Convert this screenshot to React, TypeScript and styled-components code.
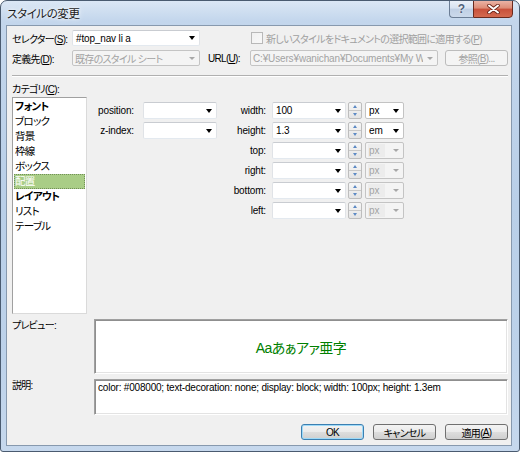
import React from "react";
import styled, { createGlobalStyle, css } from "styled-components";

const Global = createGlobalStyle`
  html, body { margin: 0; padding: 0; background: #ffffff; }
  body {
    font-family: "Liberation Sans", "Noto Sans CJK JP", sans-serif;
    font-size: 10px;
    letter-spacing: -0.7px;
    color: #000;
    font-feature-settings: "palt";
  }
  * { box-sizing: border-box; }
`;

const Window = styled.div`
  width: 520px;
  height: 452px;
  border: 1px solid #4a5b70;
  border-radius: 7px 7px 3px 3px;
  background: linear-gradient(180deg, #dbe7f5 0px, #c3d6ec 20px, #b9cfe8 45%, #bdd2ea 80%, #c6d8ed 100%);
  display: flex;
  flex-direction: column;
  padding: 0 7px 5px 5px;
  overflow: hidden;
`;

const TitleBar = styled.div`
  height: 24px;
  flex: none;
  display: flex;
  align-items: center;
`;

const TitleText = styled.div`
  flex: 1;
  margin-left: 1px;
  font-size: 11.5px;
  letter-spacing: -0.4px;
  color: #1a1a1a;
  text-shadow: 0 0 6px rgba(255, 255, 255, 0.95), 0 0 3px rgba(255, 255, 255, 0.9);
`;

const CaptionGroup = styled.div`
  align-self: flex-start;
  display: flex;
  margin-top: -1px;
  margin-right: -1px;
`;

const CaptionButton = styled.div<{ $kind: "help" | "close" }>`
  height: 18px;
  display: flex;
  align-items: center;
  justify-content: center;
  letter-spacing: 0;
  ${(p) =>
    p.$kind === "help"
      ? css`
          width: 24px;
          border: 1px solid #6b7d95;
          border-right: none;
          border-radius: 0 0 0 4px;
          background: linear-gradient(180deg, #eaf0f8 0%, #d7e2f0 45%, #bfcfe4 50%, #cbd9eb 100%);
          color: #50627a;
          font-size: 12px;
          font-weight: bold;
          text-shadow: 0 0 2px #fff;
        `
      : css`
          width: 40px;
          border: 1px solid #6a2a1e;
          border-radius: 0 0 4px 0;
          background: linear-gradient(180deg, #eab3a5 0%, #dd8b75 45%, #c8503a 50%, #d46a4f 100%);
        `}
`;

const Client = styled.div`
  flex: 1;
  background: #f0f0f0;
  border: 1px solid #8799ae;
  padding: 4px 3px 0 5px;
  display: flex;
  flex-direction: column;
`;

const Row = styled.div<{ $mt?: number }>`
  flex: none;
  height: 16px;
  display: flex;
  align-items: center;
  margin-top: ${(p) => p.$mt ?? 0}px;
`;

const Label = styled.div<{ $w?: number; $ml?: number; $disabled?: boolean }>`
  flex: none;
  ${(p) => (p.$w ? `width: ${p.$w}px;` : "")}
  margin-left: ${(p) => p.$ml ?? 0}px;
  white-space: nowrap;
  color: ${(p) => (p.$disabled ? "#a0a0a0" : "#000")};
`;

type ComboKind = "edit" | "list" | "disabled";

const ComboBox = styled.div<{ $w?: number; $h?: number; $kind: ComboKind }>`
  flex: none;
  width: ${(p) => (p.$w ? `${p.$w}px` : "100%")};
  height: ${(p) => p.$h ?? 17}px;
  border: 1px solid;
  border-radius: 2px;
  display: flex;
  align-items: center;
  overflow: hidden;
  ${(p) =>
    p.$kind === "edit"
      ? css`
          border-color: #c9ccd1 #e0e3e7 #e3e9ef #e0e3e7;
          background: #fff;
          color: #000;
        `
      : p.$kind === "list"
      ? css`
          border-color: #c3c3c3;
          background: #fff;
          color: #000;
        `
      : css`
          border-color: #c4c4c4;
          background: #f4f4f4;
          color: #a3a3a3;
        `}
`;

const ComboText = styled.span<{ $latin?: boolean; $pl?: number }>`
  flex: 1;
  min-width: 0;
  padding-left: ${(p) => p.$pl ?? 2}px;
  white-space: nowrap;
  overflow: hidden;
  ${(p) =>
    p.$latin &&
    css`
      font-size: 10px;
      letter-spacing: -0.15px;
    `}
`;

const ShadeText = styled.span`
  display: inline-block;
  background: #ececec;
  padding: 0 6px 0 1px;
  line-height: 13px;
`;

const ComboArrow = styled.span<{ $disabled?: boolean }>`
  flex: none;
  width: 14px;
  height: 100%;
  display: flex;
  align-items: center;
  justify-content: center;
  &::after {
    content: "";
    display: block;
    ${(p) =>
      p.$disabled
        ? css`
            border-left: 3px solid transparent;
            border-right: 3px solid transparent;
            border-top: 3px solid #a8a8a8;
          `
        : css`
            border-left: 3.5px solid transparent;
            border-right: 3.5px solid transparent;
            border-top: 4px solid #000;
          `}
  }
`;

const CheckBox = styled.div`
  flex: none;
  width: 12px;
  height: 12px;
  margin-left: 51px;
  border: 1px solid #b8b8b8;
  background: linear-gradient(135deg, #f0f0f0, #f8f8f8);
`;

const PushButton = styled.div<{ $w?: number; $ml?: number; $disabled?: boolean; $default?: boolean }>`
  flex: none;
  width: ${(p) => p.$w ?? 63}px;
  height: 16px;
  margin-left: ${(p) => p.$ml ?? 0}px;
  border: 1px solid #707070;
  border-radius: 3px;
  display: flex;
  align-items: center;
  justify-content: center;
  white-space: nowrap;
  background: linear-gradient(180deg, #f3f3f3 0%, #ebebeb 48%, #dddddd 52%, #cfcfcf 100%);
  ${(p) =>
    p.$disabled &&
    css`
      border-color: #bcbcbc;
      background: #f4f4f4;
      color: #a3a3a3;
    `}
  ${(p) =>
    p.$default &&
    css`
      border-color: #3c7fb1;
      box-shadow: inset 0 0 0 1px #9edaf8;
    `}
`;

const Separator = styled.div`
  flex: none;
  height: 2px;
  margin-top: 9px;
  border-top: 1px solid #b0b0b0;
  border-bottom: 1px solid #ffffff;
`;

const SectionLabel = styled.div`
  flex: none;
  height: 14px;
  line-height: 14px;
  margin-top: 6px;
`;

const MainArea = styled.div`
  flex: none;
  height: 217px;
  display: flex;
  align-items: flex-start;
`;

const CategoryList = styled.div`
  flex: none;
  width: 75px;
  height: 217px;
  background: #fff;
  border: 1px solid;
  border-color: #a0a0a0 #dadada #dadada #a0a0a0;
  padding: 1px 1px 0 1px;
`;

const CategoryItem = styled.div<{ $bold?: boolean; $selected?: boolean }>`
  height: 15px;
  line-height: 15px;
  padding-left: 1px;
  white-space: nowrap;
  font-size: 10.5px;
  font-weight: ${(p) => (p.$bold ? 700 : 400)};
  ${(p) =>
    p.$selected &&
    css`
      background: #a9cd86;
      color: #fff;
      outline: 1px dotted #728f58;
      outline-offset: -1px;
    `}
`;

const PropGrid = styled.div`
  display: grid;
  grid-template-columns: 53px 74px 55px 74px 19px 39px;
  grid-auto-rows: 17px;
  row-gap: 3px;
  margin: 5px 0 0 3px;
`;

const PropLabel = styled.div<{ $pr: number }>`
  text-align: right;
  padding-right: ${(p) => p.$pr}px;
  line-height: 17px;
  font-size: 10px;
  letter-spacing: -0.15px;
  white-space: nowrap;
`;

const Spin = styled.div`
  margin-left: 2px;
  width: 14px;
  height: 17px;
  border: 1px solid #bdbdbd;
  border-radius: 2px;
  display: flex;
  flex-direction: column;
  background: linear-gradient(180deg, #f7f7f7, #e4e4e4);
`;

const SpinHalf = styled.div<{ $dir: "up" | "down" }>`
  flex: 1;
  display: flex;
  align-items: center;
  justify-content: center;
  ${(p) => p.$dir === "up" && "border-bottom: 1px solid #c8c8c8;"}
  &::after {
    content: "";
    display: block;
    border-left: 2.5px solid transparent;
    border-right: 2.5px solid transparent;
    ${(p) =>
      p.$dir === "up"
        ? "border-bottom: 3px solid #5d8ac4;"
        : "border-top: 3px solid #5d8ac4;"}
  }
`;

const Empty = styled.div``;

const FieldRow = styled.div<{ $mt: number; $h: number }>`
  flex: none;
  display: flex;
  height: ${(p) => p.$h}px;
  margin-top: ${(p) => p.$mt}px;
`;

const FieldLabel = styled.div`
  flex: none;
  width: 82px;
  line-height: 13px;
`;

const SunkenBox = styled.div`
  flex: none;
  width: 414px;
  height: 100%;
  background: #fff;
  border: 1px solid;
  border-color: #a0a0a0 #ffffff #ffffff #a0a0a0;
  box-shadow: inset 1px 1px 0 #8f8f8f, inset -1px -1px 0 #e3e3e3;
`;

const PreviewBox = styled(SunkenBox)`
  display: flex;
  align-items: center;
  justify-content: center;
`;

const PreviewText = styled.span`
  color: #008000;
  font-size: 14px;
  letter-spacing: -0.5px;
`;

const DescBox = styled(SunkenBox)`
  padding: 1px 0 0 2px;
`;

const DescText = styled.div`
  font-size: 10px;
  letter-spacing: -0.2px;
  line-height: 13px;
  padding-left: 1px;
  white-space: nowrap;
`;

const ButtonRow = styled.div`
  flex: none;
  display: flex;
  justify-content: flex-end;
  gap: 9px;
  margin-top: 9px;
`;

const categories: { name: string; bold?: boolean; selected?: boolean }[] = [
  { name: "フォント", bold: true },
  { name: "ブロック" },
  { name: "背景" },
  { name: "枠線" },
  { name: "ボックス" },
  { name: "配置", selected: true },
  { name: "レイアウト", bold: true },
  { name: "リスト" },
  { name: "テーブル" },
];

type SideRow = { label: string; value: string; unit: string; unitEnabled: boolean };

const sideRows: SideRow[] = [
  { label: "width:", value: "100", unit: "px", unitEnabled: true },
  { label: "height:", value: "1.3", unit: "em", unitEnabled: true },
  { label: "top:", value: "", unit: "px", unitEnabled: false },
  { label: "right:", value: "", unit: "px", unitEnabled: false },
  { label: "bottom:", value: "", unit: "px", unitEnabled: false },
  { label: "left:", value: "", unit: "px", unitEnabled: false },
];

const leftRows: Record<number, string> = { 0: "position:", 1: "z-index:" };

const CloseGlyph = () => (
  <svg width="13" height="10" viewBox="0 0 13 10">
    <path d="M2 1.5 L11 8.5 M11 1.5 L2 8.5" stroke="#6b2418" strokeWidth="3.6" strokeLinecap="round" />
    <path d="M2 1.5 L11 8.5 M11 1.5 L2 8.5" stroke="#ffffff" strokeWidth="2" strokeLinecap="round" />
  </svg>
);

export default function App() {
  return (
    <>
      <Global />
      <Window>
        <TitleBar>
          <TitleText>スタイルの変更</TitleText>
          <CaptionGroup>
            <CaptionButton $kind="help">?</CaptionButton>
            <CaptionButton $kind="close">
              <CloseGlyph />
            </CaptionButton>
          </CaptionGroup>
        </TitleBar>
        <Client>
          <Row>
            <Label $w={60}>
              セレクター(<u>S</u>):
            </Label>
            <ComboBox $w={128} $h={16} $kind="edit">
              <ComboText $latin $pl={3}>#top_nav li a</ComboText>
              <ComboArrow />
            </ComboBox>
            <CheckBox />
            <Label $ml={3} $disabled>
              新しいスタイルをドキュメントの選択範囲に適用する(<u>P</u>)
            </Label>
          </Row>
          <Row $mt={4}>
            <Label $w={60}>
              定義先(<u>D</u>):
            </Label>
            <ComboBox $w={128} $h={16} $kind="disabled">
              <ComboText>既存のスタイル シート</ComboText>
              <ComboArrow $disabled />
            </ComboBox>
            <Label $w={42} $ml={8}>
              URL(<u>U</u>):
            </Label>
            <ComboBox $w={188} $h={16} $kind="disabled">
              <ComboText $latin>C:¥Users¥wanichan¥Documents¥My Wi</ComboText>
              <ComboArrow $disabled />
            </ComboBox>
            <PushButton $ml={7} $disabled>
              参照(<u>B</u>)...
            </PushButton>
          </Row>
          <Separator />
          <SectionLabel>
            カテゴリ(<u>C</u>):
          </SectionLabel>
          <MainArea>
            <CategoryList>
              {categories.map((c) => (
                <CategoryItem key={c.name} $bold={c.bold} $selected={c.selected}>
                  {c.name}
                </CategoryItem>
              ))}
            </CategoryList>
            <PropGrid>
              {sideRows.map((r, i) => (
                <React.Fragment key={r.label}>
                  {leftRows[i] ? (
                    <>
                      <PropLabel $pr={9}>{leftRows[i]}</PropLabel>
                      <ComboBox $kind="edit">
                        <ComboText />
                        <ComboArrow />
                      </ComboBox>
                    </>
                  ) : (
                    <>
                      <Empty />
                      <Empty />
                    </>
                  )}
                  <PropLabel $pr={6}>{r.label}</PropLabel>
                  <ComboBox $kind="edit">
                    <ComboText $latin $pl={3}>{r.value}</ComboText>
                    <ComboArrow />
                  </ComboBox>
                  <Spin>
                    <SpinHalf $dir="up" />
                    <SpinHalf $dir="down" />
                  </Spin>
                  {r.unitEnabled ? (
                    <ComboBox $kind="list">
                      <ComboText $latin $pl={3}>{r.unit}</ComboText>
                      <ComboArrow />
                    </ComboBox>
                  ) : (
                    <ComboBox $kind="disabled">
                      <ComboText $latin>
                        <ShadeText>{r.unit}</ShadeText>
                      </ComboText>
                      <ComboArrow $disabled />
                    </ComboBox>
                  )}
                </React.Fragment>
              ))}
            </PropGrid>
          </MainArea>
          <FieldRow $mt={5} $h={55}>
            <FieldLabel>プレビュー:</FieldLabel>
            <PreviewBox>
              <PreviewText>Aaあぁアァ亜字</PreviewText>
            </PreviewBox>
          </FieldRow>
          <FieldRow $mt={5} $h={36}>
            <FieldLabel>説明:</FieldLabel>
            <DescBox>
              <DescText>
                color: #008000; text-decoration: none; display: block; width: 100px; height: 1.3em
              </DescText>
            </DescBox>
          </FieldRow>
          <ButtonRow>
            <PushButton $default>OK</PushButton>
            <PushButton>キャンセル</PushButton>
            <PushButton>
              適用(<u>A</u>)
            </PushButton>
          </ButtonRow>
        </Client>
      </Window>
    </>
  );
}
